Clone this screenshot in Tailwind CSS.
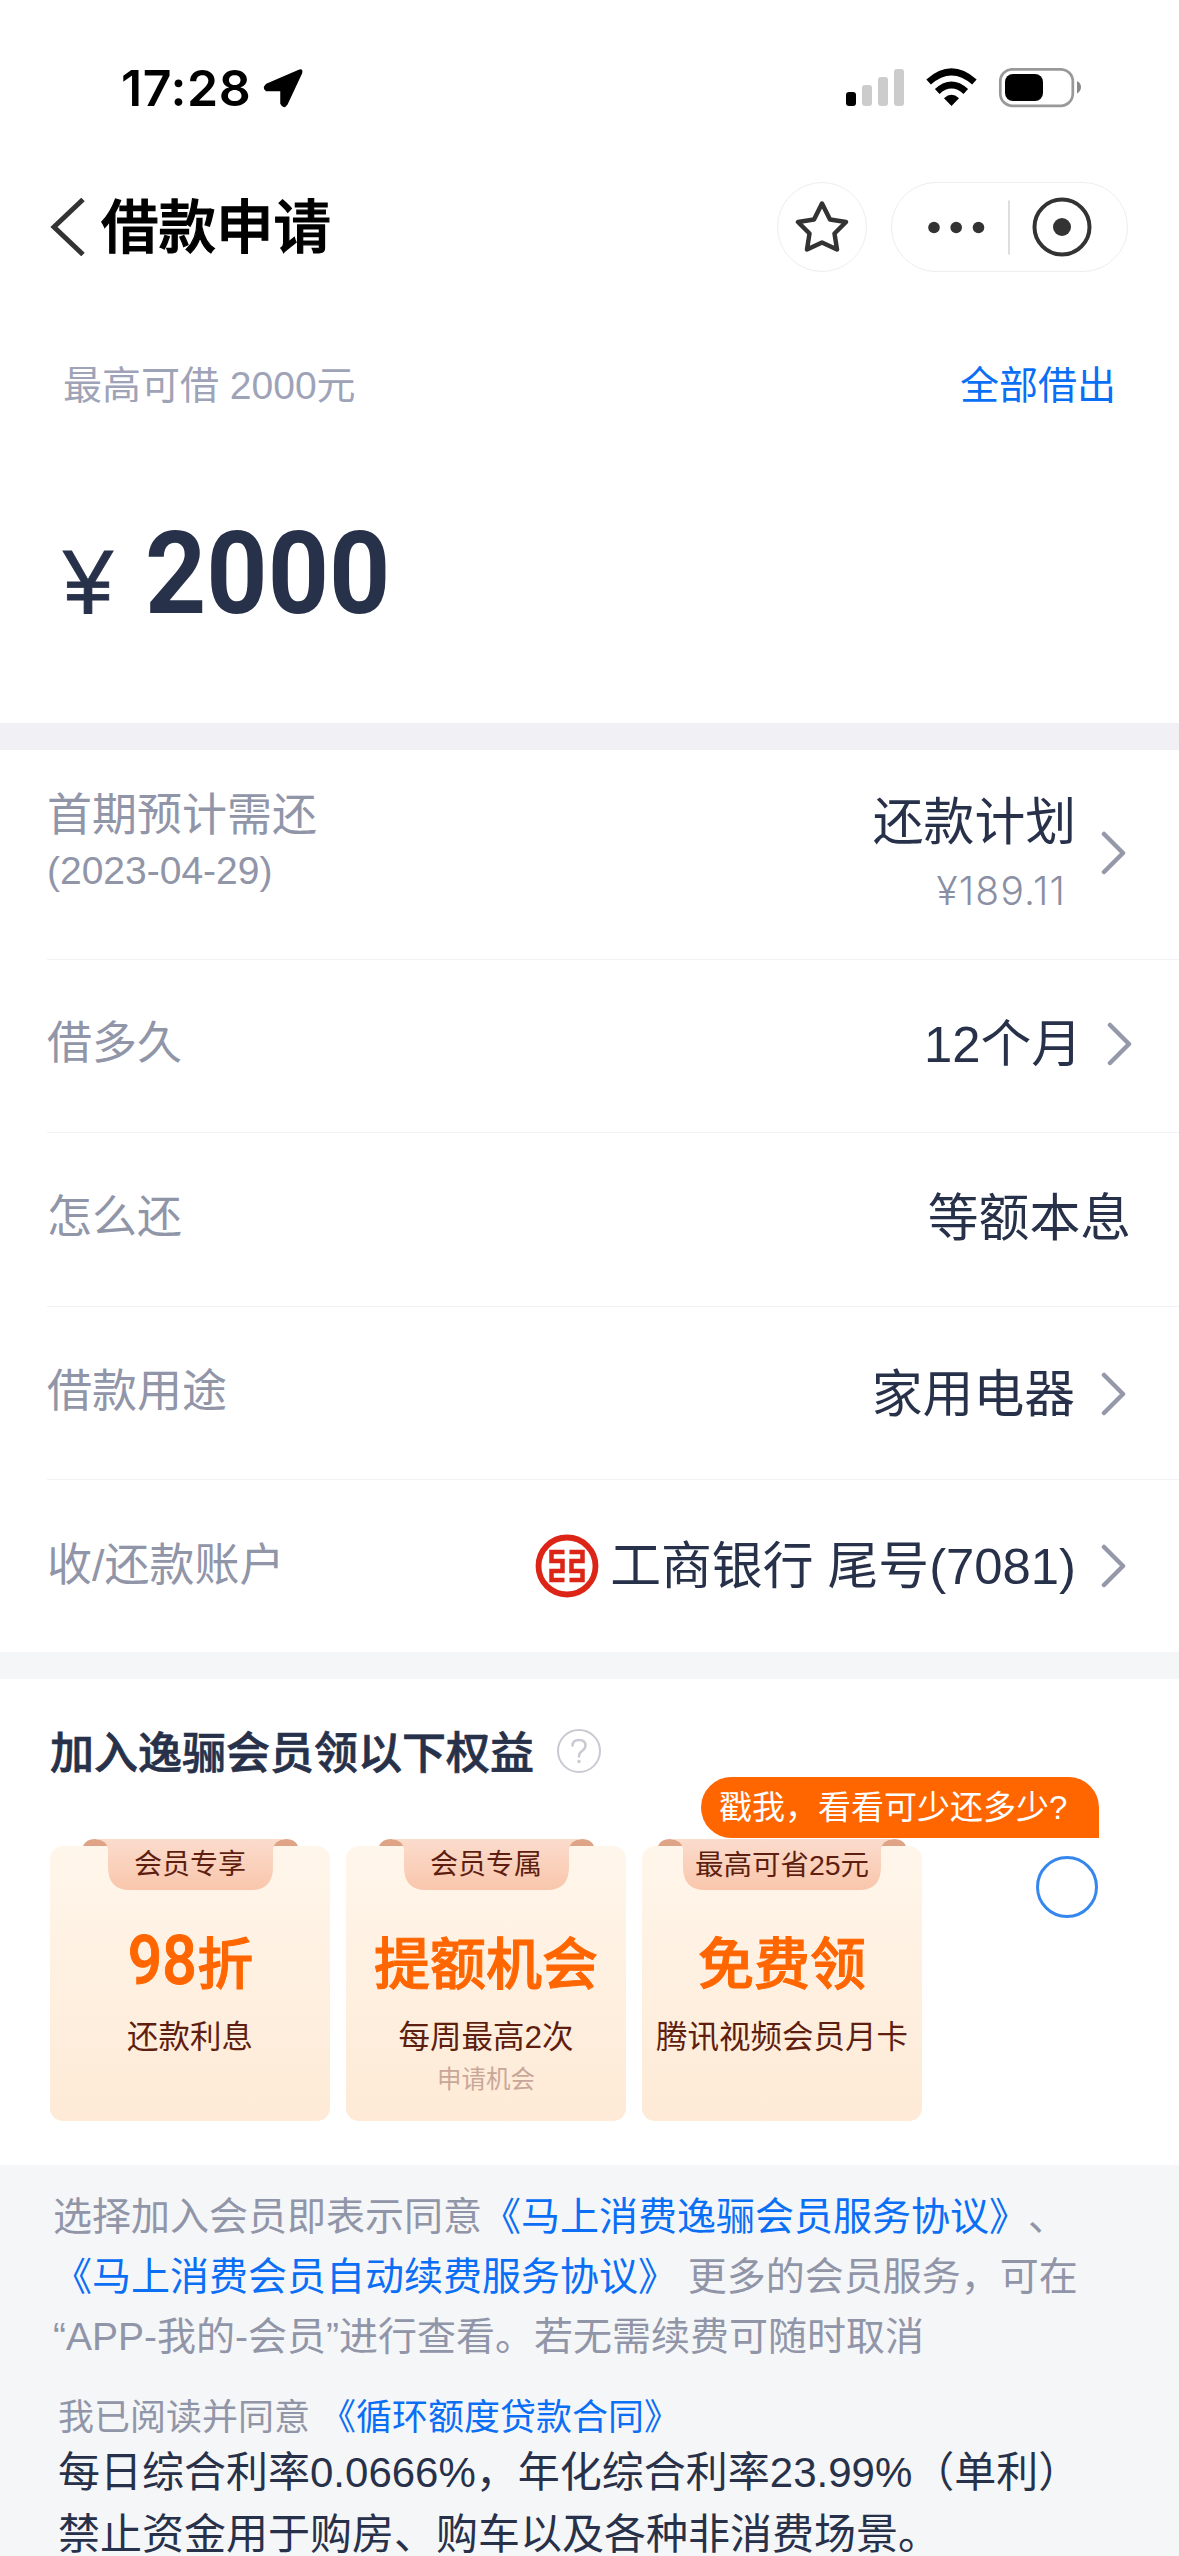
<!DOCTYPE html>
<html lang="zh-CN">
<head>
<meta charset="utf-8">
<title>借款申请</title>
<script src="https://cdn.jsdelivr.net/npm/@tailwindcss/browser@4"></script>
</head>
<body class="bg-white">
<div class="w-[1179px] h-[2556px] overflow-hidden bg-white font-['Liberation_Sans','Noto_Sans_CJK_SC',sans-serif] [text-spacing-trim:space-all] text-[#28314a] flex flex-col">

  <!-- status bar -->
  <header class="h-[176px] shrink-0 flex justify-between pl-[121px] pr-[98px] pt-[68px]">
    <div class="flex h-[40px] items-center">
      <span class="w-[142px] font-['Inter',sans-serif] font-semibold text-[50px] leading-[40px] tracking-[0.600px] text-black whitespace-nowrap">17:28</span>
      <svg class="w-[40px] h-[40px]" viewBox="0 0 40 40"><path d="M36 2.500 3.500 16.500 Q-0.500 20 3.500 22.500 H18 V35.500 Q20.500 41 24 36 L38.500 5 Q39.500 1 36 2.500Z" fill="#000" stroke="#000" stroke-width="1.500" stroke-linejoin="round"/></svg>
    </div>
    <div class="flex h-[40px] items-start">
      <svg class="w-[235px] h-[40px]" viewBox="846 68 235 40">
        <rect x="846" y="92" width="10" height="14" rx="3" fill="#000"/>
        <rect x="862" y="85" width="10" height="21" rx="3" fill="#ccc"/>
        <rect x="878" y="77" width="10" height="29" rx="3" fill="#ccc"/>
        <rect x="894" y="69" width="10" height="37" rx="3" fill="#ccc"/>
        <path d="M951.500 106 L944 98.200 Q951.500 91.500 959 98.200Z" fill="#000"/>
        <path d="M937.200 91.400 Q951.500 78.500 965.800 91.400" fill="none" stroke="#000" stroke-width="6.800"/>
        <path d="M928.600 82 Q951.500 61.800 974.400 82" fill="none" stroke="#000" stroke-width="6.800"/>
        <rect x="1000.300" y="69.300" width="72.500" height="36.500" rx="12" fill="none" stroke="#999" stroke-width="2.700"/>
        <rect x="1005" y="74" width="38" height="27" rx="8" fill="#000"/>
        <path d="M1077 81 Q1081 83 1081 87 Q1081 91 1077 93.500Z" fill="#888"/>
      </svg>
    </div>
  </header>

  <!-- navigation bar -->
  <nav class="h-[100px] shrink-0 flex items-center pl-[50px] pr-[51px] pt-[2px]">
    <svg class="w-[36px] h-[58px]" viewBox="0 0 36 58"><path d="M33 1.500 L4 29 L33 56.500" fill="none" stroke="#333" stroke-width="5"/></svg>
    <h1 class="ml-[15px] pt-[2px] font-medium [-webkit-text-stroke:1.200px_#000] text-[57.500px] leading-[60px] text-black whitespace-nowrap">借款申请</h1>
    <div class="ml-auto w-[90px] h-[90px] rounded-full border-[1.500px] border-[#eee] flex items-center justify-center">
      <svg class="w-[54px] h-[54px]" viewBox="-27 -27 54 54"><path d="M0 -23.500 L8 -7.500 L24 -5 L12.500 6.500 L15 22.500 L0 15.500 L-15 22.500 L-12.500 6.500 L-24 -5 L-8 -7.500 Z" fill="none" stroke="#333" stroke-width="4.500" stroke-linejoin="round"/></svg>
    </div>
    <div class="ml-[24px] w-[237px] h-[90px] rounded-full border-[1.500px] border-[#eee] flex items-center">
      <svg class="w-[234px] h-[87px]" viewBox="892.500 183.500 234 87">
        <circle cx="934.500" cy="227" r="5.800" fill="#333"/><circle cx="956.700" cy="227" r="5.800" fill="#333"/><circle cx="979" cy="227" r="5.800" fill="#333"/>
        <path d="M1009.500 200V254" stroke="#c8c8c8" stroke-width="1.200"/>
        <circle cx="1062.500" cy="226.500" r="27.500" fill="none" stroke="#333" stroke-width="4"/>
        <circle cx="1062.500" cy="226.500" r="9" fill="#333"/>
      </svg>
    </div>
  </nav>

  <!-- amount -->
  <section class="h-[447px] shrink-0 pl-[63px] pr-[63px] pt-[85px]">
    <div class="flex justify-between text-[39px] leading-[50px]">
      <span class="text-[#9fa3b8]">最高可借 2000元</span>
      <a class="text-[#0a6ff5]">全部借出</a>
    </div>
    <div class="flex items-baseline mt-[103px] leading-[120px]">
      <span class="w-[82px] text-[90px] [-webkit-text-stroke:0.800px_#28314a]">¥</span>
      <span class="font-['Roboto',sans-serif] font-bold text-[115px] origin-left scale-x-93">2000</span>
    </div>
  </section>
  <div class="h-[27px] shrink-0 bg-[#f0f0f5]"></div>

  <!-- loan details -->
  <section class="h-[902px] shrink-0 pl-[47px] text-[50.800px] leading-[60px] whitespace-nowrap">
    <div class="h-[210px] border-b-[1.500px] border-[#f1f2f5] flex">
      <div class="text-[#9195a8] pt-[36px]">
        <div class="text-[45px] leading-[60px]">首期预计需还</div>
        <div class="text-[39px] leading-[48px] pt-[1px]">(2023-04-29)</div>
      </div>
      <div class="ml-auto pt-[43px] text-right">
        <div>还款计划</div>
        <div class="font-['Inter',sans-serif] font-light text-[39px] leading-[48px] mt-[14px] pr-[10px] tracking-[1.200px] text-[#8a8fa3]">¥189.11</div>
      </div>
      <svg class="mt-[81px] ml-[25px] mr-[52px] w-[26px] h-[44px]" viewBox="0 0 26 44"><path d="M3 3 L22 22 L3 41" fill="none" stroke="#9498a9" stroke-width="4.500" stroke-linecap="round" stroke-linejoin="round"/></svg>
    </div>
    <div class="h-[173px] border-b-[1.500px] border-[#f1f2f5] flex items-center">
      <span class="text-[45px] text-[#9195a8] pb-[5px]">借多久</span>
      <span class="ml-auto pb-[3px]">12个月</span>
      <svg class="ml-[25px] mr-[46px] mb-[4px] w-[26px] h-[44px]" viewBox="0 0 26 44"><path d="M3 3 L22 22 L3 41" fill="none" stroke="#9498a9" stroke-width="4.500" stroke-linecap="round" stroke-linejoin="round"/></svg>
    </div>
    <div class="h-[174px] border-b-[1.500px] border-[#f1f2f5] flex items-center">
      <span class="text-[45px] text-[#9195a8] pb-[3px]">怎么还</span>
      <span class="ml-auto pb-[1px] mr-[48px]">等额本息</span>
    </div>
    <div class="h-[173px] border-b-[1.500px] border-[#f1f2f5] flex items-center">
      <span class="text-[45px] text-[#9195a8] pb-[2px]">借款用途</span>
      <span class="ml-auto pt-[3px]">家用电器</span>
      <svg class="ml-[26px] mr-[52px] mt-[2px] w-[26px] h-[44px]" viewBox="0 0 26 44"><path d="M3 3 L22 22 L3 41" fill="none" stroke="#9498a9" stroke-width="4.500" stroke-linecap="round" stroke-linejoin="round"/></svg>
    </div>
    <div class="h-[172px] flex items-center">
      <span class="text-[45px] text-[#9195a8]">收/还款账户</span>
      <svg class="ml-auto w-[64px] h-[64px] mr-[11px]" viewBox="-32 -32 64 64">
        <circle r="28.500" fill="none" stroke="#dc2516" stroke-width="5.800"/>
        <path d="M-2.500 -14H-15.500V-5H-4.500V5H-15.500V14H-2.500 M2.500 -14H15.500V-5H4.500V5H15.500V14H2.500" fill="none" stroke="#dc2516" stroke-width="4.500"/>
      </svg>
      <span class="pt-[2px]">工商银行 尾号(7081)</span>
      <svg class="ml-[25px] mr-[52px] w-[26px] h-[44px]" viewBox="0 0 26 44"><path d="M3 3 L22 22 L3 41" fill="none" stroke="#9498a9" stroke-width="4.500" stroke-linecap="round" stroke-linejoin="round"/></svg>
    </div>
  </section>
  <div class="h-[27px] shrink-0 bg-[#f5f6f8]"></div>

  <!-- membership benefits -->
  <section class="relative h-[486px] shrink-0 px-[50px] pt-[44px] whitespace-nowrap">
    <div class="flex items-center h-[60px]">
      <h2 class="font-medium [-webkit-text-stroke:0.700px_#28314a] text-[44px] leading-[60px] pt-[1px]">加入逸骊会员领以下权益</h2>
      <div class="ml-[23px] w-[44px] h-[44px] mt-[-4px] rounded-full border-[2.500px] border-[#c9cad2] flex items-center justify-center">
        <svg class="w-[20px] h-[28px]" viewBox="0 0 20 28"><path d="M3.500 8.500 Q3.500 3 10 3 Q16.500 3 16.500 8.500 Q16.500 11.500 13 14 Q10 16 10 19.500" fill="none" stroke="#c9cad2" stroke-width="2.500" stroke-linecap="round"/><circle cx="10" cy="24.500" r="1.700" fill="#c9cad2"/></svg>
      </div>
    </div>
    <div class="mt-[63px] flex gap-[16px] text-center text-[#5e1e10]">
      <div class="relative w-[280px] h-[275px] rounded-[13px] bg-linear-to-b from-[#fff6eb] to-[#feead6]">
        <svg class="absolute left-[33px] top-[-7px] w-[215px] h-[51px]" viewBox="0 0 215 51">
          <defs><linearGradient id="tab" x1="0" y1="0" x2="0" y2="1"><stop offset="0" stop-color="#fbdccd"/><stop offset="1" stop-color="#f9c6ab"/></linearGradient></defs>
          <path d="M0 7 Q3 0 12 0 Q22 0 25 7Z M190 7 Q193 0 203 0 Q212 0 215 7Z" fill="#dfa486"/>
          <path d="M12 0 H203 Q191 1 190 10 V28 Q190 51 168 51 H47 Q25 51 25 28 V10 Q24 1 12 0Z" fill="url(#tab)"/>
        </svg>
        <div class="relative pt-[3px] text-[28px] leading-[32px]">会员专享</div>
        <div class="mt-[52px] h-[64px] font-medium [-webkit-text-stroke:1px_#ff6600] text-[56px] leading-[64px] text-[#ff6600]"><span class="inline-block font-['Roboto',sans-serif] text-[69px] leading-[50px] scale-x-88 mx-[-4px]">98</span>折</div>
        <div class="mt-[20px] text-[31.500px] leading-[40px]">还款利息</div>
      </div>
      <div class="relative w-[280px] h-[275px] rounded-[13px] bg-linear-to-b from-[#fff6eb] to-[#feead6]">
        <svg class="absolute left-[33px] top-[-7px] w-[215px] h-[51px]" viewBox="0 0 215 51">
          <path d="M0 7 Q3 0 12 0 Q22 0 25 7Z M190 7 Q193 0 203 0 Q212 0 215 7Z" fill="#dfa486"/>
          <path d="M12 0 H203 Q191 1 190 10 V28 Q190 51 168 51 H47 Q25 51 25 28 V10 Q24 1 12 0Z" fill="url(#tab)"/>
        </svg>
        <div class="relative pt-[3px] text-[28px] leading-[32px]">会员专属</div>
        <div class="mt-[52px] font-medium [-webkit-text-stroke:1px_#ff6600] text-[56px] leading-[64px] text-[#ff6600]">提额机会</div>
        <div class="mt-[20px] text-[31.500px] leading-[40px]">每周最高2次</div>
        <div class="mt-[7px] text-[24.500px] leading-[32px] text-[#c9a798]">申请机会</div>
      </div>
      <div class="relative w-[280px] h-[275px] rounded-[13px] bg-linear-to-b from-[#fff6eb] to-[#feead6]">
        <svg class="absolute left-[16px] top-[-7px] w-[248px] h-[51px]" viewBox="0 0 248 51">
          <path d="M0 7 Q3 0 12 0 Q22 0 25 7Z M223 7 Q226 0 236 0 Q245 0 248 7Z" fill="#dfa486"/>
          <path d="M12 0 H236 Q224 1 223 10 V28 Q223 51 201 51 H47 Q25 51 25 28 V10 Q24 1 12 0Z" fill="url(#tab)"/>
        </svg>
        <div class="relative pt-[3px] text-[28.500px] leading-[32px]">最高可省25元</div>
        <div class="mt-[52px] font-medium [-webkit-text-stroke:1px_#ff6600] text-[56px] leading-[64px] text-[#ff6600]">免费领</div>
        <div class="mt-[20px] text-[31.500px] leading-[40px]">腾讯视频会员月卡</div>
      </div>
      <div class="ml-[98px] mt-[10px] w-[62px] h-[62px] rounded-full border-[3px] border-[#3587ee]"></div>
    </div>
    <div class="absolute left-[701px] top-[98px] w-[398px] h-[61px] rounded-[31px] rounded-br-none bg-[#ff6600] text-white text-[33px] leading-[62px] pl-[18px]">戳我，看看可少还多少?</div>
  </section>

  <!-- agreements -->
  <footer class="grow bg-[#f5f6f8] pt-[22px] whitespace-nowrap">
    <div class="pl-[53px] text-[39px] leading-[60px] text-[#9195a8]">
      <p>选择加入会员即表示同意<a class="text-[#0a6ff5]">《马上消费逸骊会员服务协议》</a>、</p>
      <p><a class="text-[#0a6ff5]">《马上消费会员自动续费服务协议》</a> 更多的会员服务，可在</p>
      <p>“APP-我的-会员”进行查看。若无需续费可随时取消</p>
    </div>
    <div class="pl-[58px] pt-[24px]">
      <p class="text-[36px] leading-[54px] text-[#9195a8]">我已阅读并同意 <a class="text-[#0a6ff5]">《循环额度贷款合同》</a></p>
      <p class="text-[42px] leading-[62px] mt-[-3px]">每日综合利率0.0666%，年化综合利率23.99%（单利）</p>
      <p class="text-[42px] leading-[62px]">禁止资金用于购房、购车以及各种非消费场景。</p>
    </div>
  </footer>
</div>
</body>
</html>
